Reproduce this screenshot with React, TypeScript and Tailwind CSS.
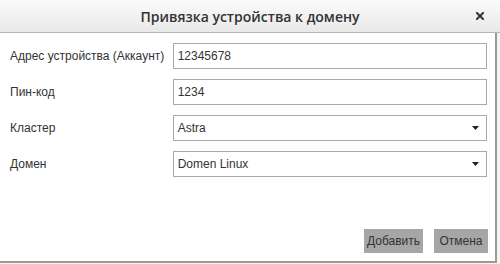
const FIELDS: { label: string; value: string; select?: boolean }[] = [
  { label: 'Адрес устройства (Аккаунт)', value: '12345678' },
  { label: 'Пин-код', value: '1234' },
  { label: 'Кластер', value: 'Astra', select: true },
  { label: 'Домен', value: 'Domen Linux', select: true },
]

export default function App() {
  return (
    <div className="h-[264px] w-[500px] bg-[#f4f4f4]">
      <div className="flex h-[263px] w-[497px] flex-col border-b-2 border-r-2 border-[#9a9a9a] bg-white font-['Liberation_Sans',Arial,sans-serif] text-[12px] text-[#333]">
        {/* header */}
        <div className="relative flex h-[33px] w-[500px] shrink-0 items-center justify-center border-b border-[#b5b5b5] bg-gradient-to-b from-[#fbfbfb] to-[#e9e9e9]">
          <span className="font-['Open_Sans',sans-serif] text-[14px] font-semibold text-[#333]">
            Привязка устройства к домену
          </span>
          <svg className="absolute right-[16px] top-[12px]" width="8" height="8" viewBox="0 0 8 8">
            <path d="M1 1l6 6M7 1l-6 6" stroke="#333" strokeWidth="2" strokeLinecap="square" />
          </svg>
        </div>

        {/* form */}
        <div className="flex flex-col gap-[10px] pl-[10px] pr-[8px] pt-[10px]">
          {FIELDS.map(f => (
            <div key={f.label} className="flex items-center">
              <span className="w-[163px]">{f.label}</span>
              <div className="flex h-[26px] w-[315px] items-center justify-between border border-[#a9a9a9] pl-[4px] pr-[7px]">
                <span>{f.value}</span>
                {f.select && (
                  <svg width="7" height="4" viewBox="0 0 7 4">
                    <path d="M0 0h7L3.5 4z" fill="#222" />
                  </svg>
                )}
              </div>
            </div>
          ))}
        </div>

        {/* footer */}
        <div className="mt-auto flex justify-end gap-[11px] pb-[8px] pr-[7px]">
          <button className="h-[24px] w-[59px] bg-[#a6a6a6] text-[12px] text-[#333]">Добавить</button>
          <button className="h-[24px] w-[54px] bg-[#a6a6a6] text-[12px] text-[#333]">Отмена</button>
        </div>
      </div>
    </div>
  )
}
